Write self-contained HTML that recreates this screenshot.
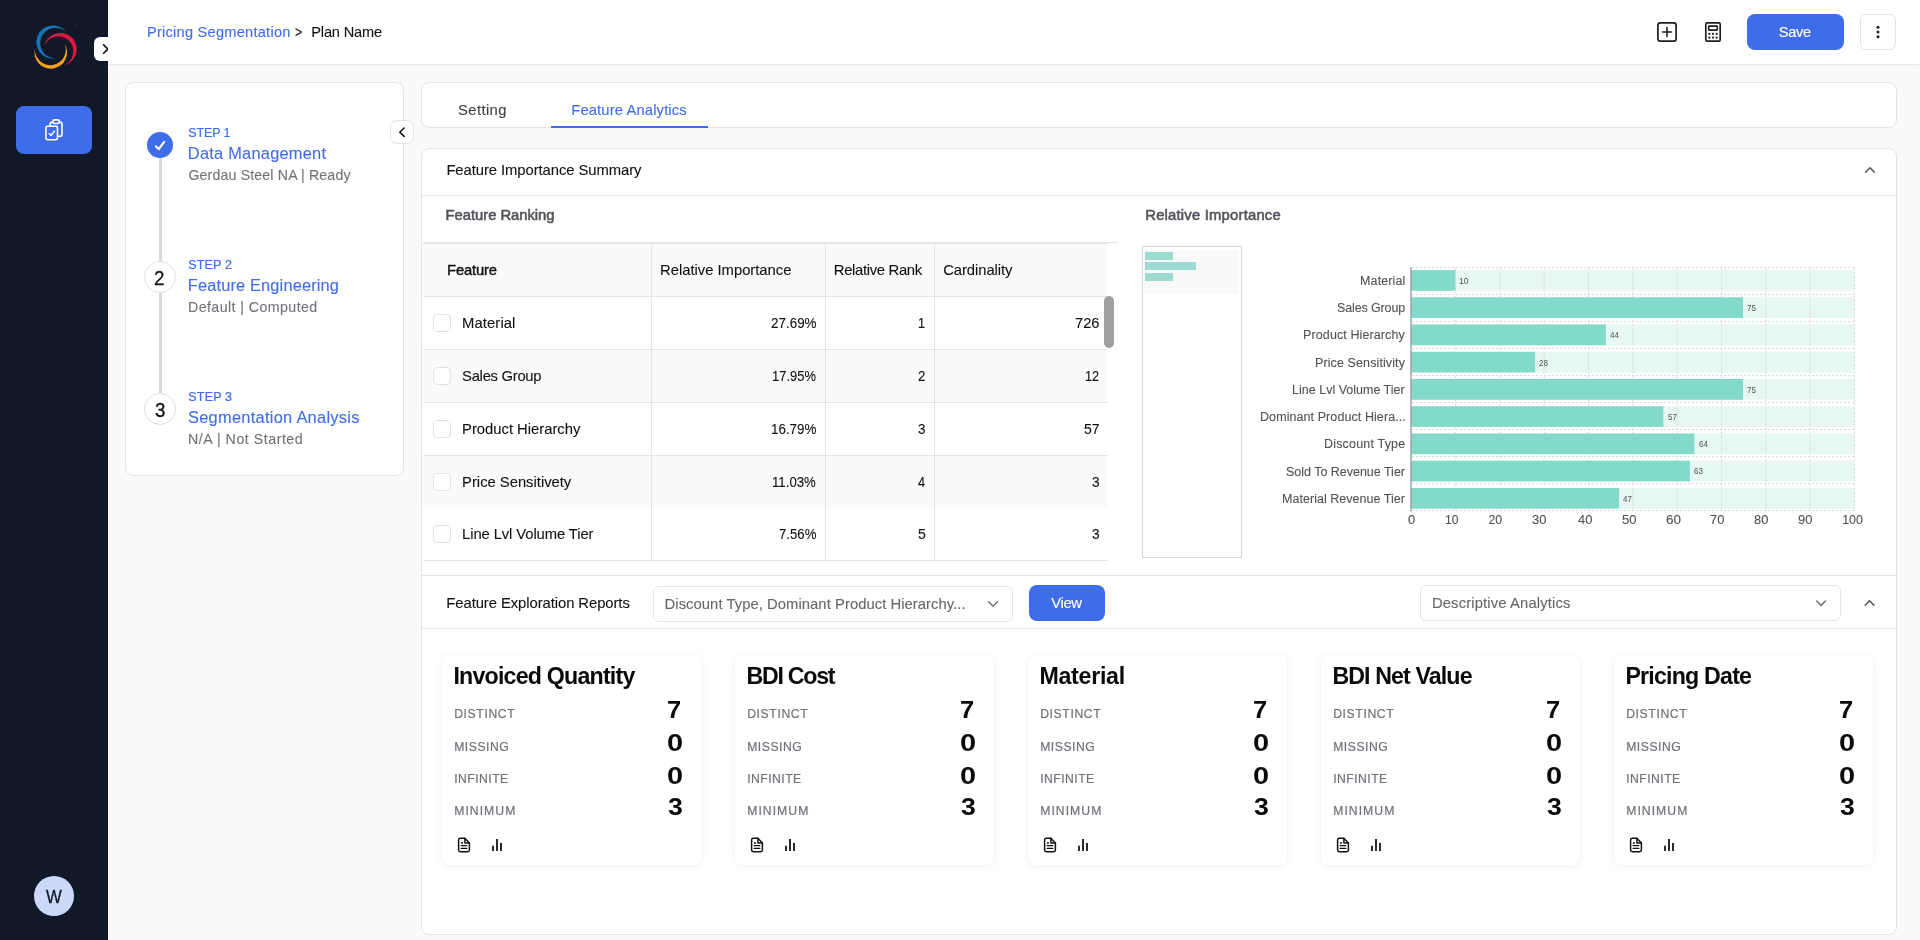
<!DOCTYPE html>
<html lang="en">
<head>
<meta charset="utf-8">
<title>Pricing Segmentation - Feature Analytics</title>
<style>
*{box-sizing:border-box;margin:0;padding:0}
html,body{width:1920px;height:940px;overflow:hidden;background:#fafafa;font-family:"Liberation Sans",sans-serif;color:#111}
.a{position:absolute}
.t{position:absolute;white-space:nowrap;line-height:1}
.card{position:absolute;background:#fff;border:1px solid #e4e4e7;border-radius:8px}
.hl{position:absolute;height:1px;background:#e5e5e5}
.vl{position:absolute;width:1px;background:#e5e5e5}
.cb{position:absolute;width:18px;height:18px;border:1px solid #e2e2e5;border-radius:4px;background:#fff}
.fc{position:absolute;top:654.6px;width:259.6px;height:210.4px;background:#fff;border-radius:8px;box-shadow:0 1px 7px rgba(0,0,0,.075)}
svg{position:absolute;overflow:visible}
</style>
</head>
<body>
<!-- sidebar -->
<div class="a" style="left:0;top:0;width:108px;height:940px;background:#111827"></div>
<svg style="left:0;top:0" width="108" height="100" viewBox="0 0 108 100"><path fill="#1973b9" d="M65.94 31.72A16.60 16.60 0 1 0 56.77 58.34A15.36 15.36 0 1 1 65.94 31.72Z"/><path fill="#e0173f" d="M44.37 46.07A16.30 16.30 0 1 1 64.04 65.07A14.97 14.97 0 1 0 44.37 46.07Z"/><path fill="#f9a11b" d="M34.99 48.43A16.30 16.30 0 1 0 64.63 43.74A15.44 15.44 0 1 1 34.99 48.43Z"/><circle cx="75.7" cy="25.4" r="0.7" fill="#1973b9" opacity="0.6"/></svg>
<div class="a" style="left:16px;top:106px;width:76px;height:48px;border-radius:8px;background:#3f6ce8"></div>
<svg style="left:30px;top:106px" width="48" height="48" viewBox="30 106 48 48" fill="none" stroke="#fff" stroke-width="1.6" stroke-linecap="round" stroke-linejoin="round">
<path d="M52.6 122.1h-0.4a2 2 0 0 0-2 2v1.6M59.6 122.1h0.4a2 2 0 0 1 2 2v10.2a2 2 0 0 1-2 2h-1.6"/>
<rect x="52.9" y="119.9" width="6.4" height="3.6" rx="1.6"/>
<rect x="45.9" y="126.3" width="11.6" height="13.4" rx="1.6"/>
<path d="M49.3 133.7l1.7 1.8 3.4-4.2" stroke-width="1.5"/>
</svg>
<div class="a" style="left:34px;top:876px;width:40px;height:40px;border-radius:50%;background:#ccd8fa"></div>
<div class="a" style="left:94px;top:37px;width:24px;height:24px;border-radius:6px;background:#fff"></div>
<svg style="left:94px;top:37px" width="14" height="24" viewBox="94 37 14 24" fill="none" stroke="#111" stroke-width="1.6" stroke-linecap="round" stroke-linejoin="round"><path d="M103.6 44.9l4.3 4.2-4.3 4.2"/></svg>
<!-- topbar -->
<div class="a" style="left:108px;top:0;width:1812px;height:65px;background:#fff;border-bottom:1px solid #eaeaea;box-shadow:0 1px 2px rgba(0,0,0,.025)"></div>
<div class="a" style="left:1747px;top:14px;width:97px;height:36px;border-radius:8px;background:#3f6ce8"></div>
<div class="a" style="left:1860px;top:14px;width:36px;height:36px;border-radius:6px;background:#fff;border:1px solid #e5e5e5"></div>
<svg style="left:1650px;top:14px" width="80" height="36" viewBox="1650 14 80 36" fill="none" stroke="#1f1f1f" stroke-width="1.7" stroke-linecap="round" stroke-linejoin="round">
<rect x="1657.9" y="22.9" width="18.2" height="18.2" rx="2.4"/>
<path d="M1662.6 32h8.8M1667 27.6v8.8" stroke-width="1.6"/>
<rect x="1705.8" y="22.9" width="14.4" height="18.2" rx="1.4"/>
<rect x="1708.7" y="26.1" width="8.6" height="4" rx="0.3" stroke-width="1.6"/>
<g fill="#1f1f1f" stroke="none"><circle cx="1709.3" cy="33.8" r="1.15"/><circle cx="1713" cy="33.8" r="1.15"/><circle cx="1716.7" cy="33.8" r="1.15"/><circle cx="1709.3" cy="37.6" r="1.15"/><circle cx="1713" cy="37.6" r="1.15"/><circle cx="1716.7" cy="37.6" r="1.15"/></g>
</svg>
<svg style="left:1860px;top:14px" width="36" height="36" viewBox="1860 14 36 36" fill="#1f1f1f"><circle cx="1878" cy="27.3" r="1.5"/><circle cx="1878" cy="32" r="1.5"/><circle cx="1878" cy="36.7" r="1.5"/></svg>
<!-- stepper card -->
<div class="card" style="left:125px;top:82px;width:279px;height:394px"></div>
<div class="a" style="left:159px;top:150px;width:3px;height:260px;background:#d9d9d9"></div>
<div class="a" style="left:147px;top:132px;width:26px;height:26px;border-radius:50%;background:#3f6ce8"></div>
<svg style="left:147px;top:132px" width="26" height="26" viewBox="147 132 26 26" fill="none" stroke="#fff" stroke-width="2.1" stroke-linecap="round" stroke-linejoin="round"><path d="M155.9 146.3l2.9 2.9 5.4-7.3"/></svg>
<div class="a" style="left:144px;top:261px;width:32px;height:32px;border-radius:50%;background:#fff;border:1px solid #e0e0e4"></div>
<div class="a" style="left:144px;top:393px;width:32px;height:32px;border-radius:50%;background:#fff;border:1px solid #e0e0e4"></div>
<div class="a" style="left:390px;top:120px;width:24px;height:24px;border-radius:7px;background:#fff;border:1px solid #e4e4e7"></div>
<svg style="left:390px;top:120px" width="24" height="24" viewBox="390 120 24 24" fill="none" stroke="#111" stroke-width="1.6" stroke-linecap="round" stroke-linejoin="round"><path d="M404.1 128l-4.3 4.2 4.3 4.2"/></svg>
<!-- tabs card -->
<div class="card" style="left:421px;top:82px;width:1476px;height:46px"></div>
<div class="a" style="left:551px;top:126px;width:157px;height:2px;background:#3f6ce8"></div>
<!-- main card -->
<div class="card" style="left:421px;top:148px;width:1476px;height:787px"></div>
<div class="hl" style="left:422px;top:195px;width:1474px"></div>
<div class="a" style="left:423px;top:242px;width:695px;height:1px;background:#e5e5e5"></div><div class="a" style="left:423px;top:243px;width:685px;height:1px;background:#e5e5e5"></div><div class="a" style="left:423px;top:244px;width:685px;height:52px;background:#fafafa"></div><div class="a" style="left:423px;top:349px;width:685px;height:53px;background:#fafafa"></div><div class="a" style="left:423px;top:455px;width:685px;height:53px;background:#fafafa"></div><div class="hl" style="left:423px;top:296px;width:685px"></div><div class="hl" style="left:423px;top:349px;width:685px"></div><div class="hl" style="left:423px;top:402px;width:685px"></div><div class="hl" style="left:423px;top:455px;width:685px"></div><div class="hl" style="left:423px;top:560px;width:685px"></div><div class="vl" style="left:651px;top:244px;height:316px"></div><div class="vl" style="left:825px;top:244px;height:316px"></div><div class="vl" style="left:934px;top:244px;height:316px"></div><div class="cb" style="left:433px;top:314px"></div><div class="cb" style="left:433px;top:367px"></div><div class="cb" style="left:433px;top:420px"></div><div class="cb" style="left:433px;top:473px"></div><div class="cb" style="left:433px;top:525px"></div><div class="a" style="left:1104px;top:295.7px;width:10.2px;height:52.2px;border-radius:5.1px;background:#a0a0a0"></div>
<div class="a" style="left:1142px;top:246px;width:100px;height:312px;border:1px solid #d6d6d6;background:#fff"></div><div class="a" style="left:1144.2px;top:250px;width:95.1px;height:43.7px;background:#f9f9f9"></div><div class="a" style="left:1145px;top:252px;width:28px;height:8.2px;background:#9ddbd0"></div><div class="a" style="left:1145px;top:262.2px;width:51px;height:8.2px;background:#9ddbd0"></div><div class="a" style="left:1145px;top:272.8px;width:28px;height:8.2px;background:#9ddbd0"></div><svg style="left:0;top:0" width="1920" height="940" viewBox="0 0 1920 940"><rect x="1411.2" y="270.05" width="443.3" height="20.7" fill="#e6f7f4"/><rect x="1411.2" y="297.29" width="443.3" height="20.7" fill="#e6f7f4"/><rect x="1411.2" y="324.53" width="443.3" height="20.7" fill="#e6f7f4"/><rect x="1411.2" y="351.77" width="443.3" height="20.7" fill="#e6f7f4"/><rect x="1411.2" y="379.01" width="443.3" height="20.7" fill="#e6f7f4"/><rect x="1411.2" y="406.25" width="443.3" height="20.7" fill="#e6f7f4"/><rect x="1411.2" y="433.49" width="443.3" height="20.7" fill="#e6f7f4"/><rect x="1411.2" y="460.73" width="443.3" height="20.7" fill="#e6f7f4"/><rect x="1411.2" y="487.97" width="443.3" height="20.7" fill="#e6f7f4"/><g stroke="#d6d6d6" stroke-width="1" stroke-dasharray="2 2" fill="none"><path d="M1412.2 267.60H1854.5"/><path d="M1412.2 294.60H1854.5"/><path d="M1412.2 321.60H1854.5"/><path d="M1412.2 348.60H1854.5"/><path d="M1412.2 375.60H1854.5"/><path d="M1412.2 402.60H1854.5"/><path d="M1412.2 429.60H1854.5"/><path d="M1412.2 456.60H1854.5"/><path d="M1412.2 483.60H1854.5"/><path d="M1412.2 510.60H1854.5"/><path d="M1455.53 267.6V510.6"/><path d="M1499.86 267.6V510.6"/><path d="M1544.19 267.6V510.6"/><path d="M1588.52 267.6V510.6"/><path d="M1632.85 267.6V510.6"/><path d="M1677.18 267.6V510.6"/><path d="M1721.51 267.6V510.6"/><path d="M1765.84 267.6V510.6"/><path d="M1810.17 267.6V510.6"/><path d="M1854.50 267.6V510.6"/></g><rect x="1411.2" y="270.05" width="44.2" height="20.7" fill="#7fd8c8" fill-opacity="0.96"/><rect x="1411.2" y="297.29" width="331.8" height="20.7" fill="#7fd8c8" fill-opacity="0.96"/><rect x="1411.2" y="324.53" width="194.7" height="20.7" fill="#7fd8c8" fill-opacity="0.96"/><rect x="1411.2" y="351.77" width="123.9" height="20.7" fill="#7fd8c8" fill-opacity="0.96"/><rect x="1411.2" y="379.01" width="331.8" height="20.7" fill="#7fd8c8" fill-opacity="0.96"/><rect x="1411.2" y="406.25" width="252.2" height="20.7" fill="#7fd8c8" fill-opacity="0.96"/><rect x="1411.2" y="433.49" width="283.1" height="20.7" fill="#7fd8c8" fill-opacity="0.96"/><rect x="1411.2" y="460.73" width="278.7" height="20.7" fill="#7fd8c8" fill-opacity="0.96"/><rect x="1411.2" y="487.97" width="207.9" height="20.7" fill="#7fd8c8" fill-opacity="0.96"/><path d="M1411 267V511.6" stroke="#9696a2" stroke-width="1.3"/></svg>
<div class="hl" style="left:422px;top:575px;width:1474px"></div>
<div class="hl" style="left:422px;top:628px;width:1474px"></div>
<div class="a" style="left:653px;top:586px;width:360px;height:36px;border-radius:6px;background:#fff;border:1px solid #e5e5e5"></div>
<div class="a" style="left:1029px;top:585px;width:76px;height:36px;border-radius:8px;background:#3f6ce8"></div>
<div class="a" style="left:1420px;top:585px;width:421px;height:36px;border-radius:6px;background:#fff;border:1px solid #e5e5e5"></div>
<svg style="left:0;top:0" width="1920" height="940" viewBox="0 0 1920 940" fill="none" stroke-width="1.5" stroke-linecap="round" stroke-linejoin="round">
<path d="M988.7 601.8l4.4 4.4 4.4-4.4" stroke="#71717a"/><path d="M1816.6999999999998 601.0l4.4 4.4 4.4-4.4" stroke="#71717a"/><path d="M1865.1999999999998 605.2l4.4-4.4 4.4 4.4" stroke="#52525b"/><path d="M1865.6 172.2l4.4-4.4 4.4 4.4" stroke="#52525b"/>
</svg>
<div class="fc" style="left:441.8px"></div><svg style="left:454px;top:834px" width="56" height="22" viewBox="454 834 56 22" fill="none" stroke="#111" stroke-width="1.5" stroke-linecap="round" stroke-linejoin="round"><path d="M464.9 838.3h-4.6a1.7 1.7 0 0 0-1.7 1.7v10a1.7 1.7 0 0 0 1.7 1.7h7.4a1.7 1.7 0 0 0 1.7-1.7v-7.1z"/><path d="M464.9 838.3v4.6h4.5"/><path d="M461.2 845.7h5.6M461.2 848.45h5.6" stroke-width="1.3"/><rect x="461.1" y="842.1" width="1.7" height="1.7" fill="#111" stroke="none"/><path d="M493 851v-5.3M497 851v-11.9M501 851v-8" stroke="#222" stroke-width="1.9" stroke-linecap="butt"/></svg><div class="fc" style="left:734.8px"></div><svg style="left:747px;top:834px" width="56" height="22" viewBox="454 834 56 22" fill="none" stroke="#111" stroke-width="1.5" stroke-linecap="round" stroke-linejoin="round"><path d="M464.9 838.3h-4.6a1.7 1.7 0 0 0-1.7 1.7v10a1.7 1.7 0 0 0 1.7 1.7h7.4a1.7 1.7 0 0 0 1.7-1.7v-7.1z"/><path d="M464.9 838.3v4.6h4.5"/><path d="M461.2 845.7h5.6M461.2 848.45h5.6" stroke-width="1.3"/><rect x="461.1" y="842.1" width="1.7" height="1.7" fill="#111" stroke="none"/><path d="M493 851v-5.3M497 851v-11.9M501 851v-8" stroke="#222" stroke-width="1.9" stroke-linecap="butt"/></svg><div class="fc" style="left:1027.8px"></div><svg style="left:1040px;top:834px" width="56" height="22" viewBox="454 834 56 22" fill="none" stroke="#111" stroke-width="1.5" stroke-linecap="round" stroke-linejoin="round"><path d="M464.9 838.3h-4.6a1.7 1.7 0 0 0-1.7 1.7v10a1.7 1.7 0 0 0 1.7 1.7h7.4a1.7 1.7 0 0 0 1.7-1.7v-7.1z"/><path d="M464.9 838.3v4.6h4.5"/><path d="M461.2 845.7h5.6M461.2 848.45h5.6" stroke-width="1.3"/><rect x="461.1" y="842.1" width="1.7" height="1.7" fill="#111" stroke="none"/><path d="M493 851v-5.3M497 851v-11.9M501 851v-8" stroke="#222" stroke-width="1.9" stroke-linecap="butt"/></svg><div class="fc" style="left:1320.8px"></div><svg style="left:1333px;top:834px" width="56" height="22" viewBox="454 834 56 22" fill="none" stroke="#111" stroke-width="1.5" stroke-linecap="round" stroke-linejoin="round"><path d="M464.9 838.3h-4.6a1.7 1.7 0 0 0-1.7 1.7v10a1.7 1.7 0 0 0 1.7 1.7h7.4a1.7 1.7 0 0 0 1.7-1.7v-7.1z"/><path d="M464.9 838.3v4.6h4.5"/><path d="M461.2 845.7h5.6M461.2 848.45h5.6" stroke-width="1.3"/><rect x="461.1" y="842.1" width="1.7" height="1.7" fill="#111" stroke="none"/><path d="M493 851v-5.3M497 851v-11.9M501 851v-8" stroke="#222" stroke-width="1.9" stroke-linecap="butt"/></svg><div class="fc" style="left:1613.8px"></div><svg style="left:1626px;top:834px" width="56" height="22" viewBox="454 834 56 22" fill="none" stroke="#111" stroke-width="1.5" stroke-linecap="round" stroke-linejoin="round"><path d="M464.9 838.3h-4.6a1.7 1.7 0 0 0-1.7 1.7v10a1.7 1.7 0 0 0 1.7 1.7h7.4a1.7 1.7 0 0 0 1.7-1.7v-7.1z"/><path d="M464.9 838.3v4.6h4.5"/><path d="M461.2 845.7h5.6M461.2 848.45h5.6" stroke-width="1.3"/><rect x="461.1" y="842.1" width="1.7" height="1.7" fill="#111" stroke="none"/><path d="M493 851v-5.3M497 851v-11.9M501 851v-8" stroke="#222" stroke-width="1.9" stroke-linecap="butt"/></svg>
<div class="a" style="left:0;top:0;width:1920px;height:940px;will-change:transform">
<div class="t" style="left:147.00px;top:25px;font-size:14.6px;color:#3f6ce8;letter-spacing:0.245px;-webkit-text-stroke:0.1px #3f6ce8;">Pricing Segmentation</div>
<div class="t" style="left:294.96px;top:25px;font-size:14.6px;color:#111111;-webkit-text-stroke:0.1px #111111;transform:scaleX(0.8600);transform-origin:0 0;">&gt;</div>
<div class="t" style="left:311.30px;top:25px;font-size:14.6px;color:#111111;letter-spacing:-0.174px;-webkit-text-stroke:0.1px #111111;">Plan Name</div>
<div class="t" style="left:1778.85px;top:25px;font-size:14.6px;color:#fff;letter-spacing:-0.326px;-webkit-text-stroke:0.15px #fff;">Save</div>
<div class="t" style="left:188.37px;top:127px;font-size:12.5px;color:#3f6ce8;letter-spacing:-0.161px;-webkit-text-stroke:0.2px #3f6ce8;">STEP 1</div>
<div class="t" style="left:187.84px;top:145px;font-size:16.4px;color:#3f6ce8;letter-spacing:0.236px;-webkit-text-stroke:0.1px #3f6ce8;">Data Management</div>
<div class="t" style="left:188.39px;top:168px;font-size:14.2px;color:#71717a;letter-spacing:0.141px;-webkit-text-stroke:0.1px #71717a;">Gerdau Steel NA | Ready</div>
<div class="t" style="left:188.37px;top:259px;font-size:12.5px;color:#3f6ce8;letter-spacing:0.142px;-webkit-text-stroke:0.2px #3f6ce8;">STEP 2</div>
<div class="t" style="left:187.84px;top:277px;font-size:16.4px;color:#3f6ce8;letter-spacing:0.142px;-webkit-text-stroke:0.1px #3f6ce8;">Feature Engineering</div>
<div class="t" style="left:188.00px;top:300px;font-size:14.2px;color:#71717a;letter-spacing:0.426px;-webkit-text-stroke:0.1px #71717a;">Default | Computed</div>
<div class="t" style="left:188.37px;top:391px;font-size:12.5px;color:#3f6ce8;letter-spacing:0.168px;-webkit-text-stroke:0.2px #3f6ce8;">STEP 3</div>
<div class="t" style="left:188.00px;top:409px;font-size:16.4px;color:#3f6ce8;letter-spacing:0.277px;-webkit-text-stroke:0.1px #3f6ce8;">Segmentation Analysis</div>
<div class="t" style="left:188.00px;top:432px;font-size:14.2px;color:#71717a;letter-spacing:0.529px;-webkit-text-stroke:0.1px #71717a;">N/A | Not Started</div>
<div class="t" style="left:154.30px;top:267px;font-size:21px;color:#111111;-webkit-text-stroke:0.3px #111111;transform:scaleX(0.8935);transform-origin:0 0;">2</div>
<div class="t" style="left:154.54px;top:399px;font-size:21px;color:#111111;-webkit-text-stroke:0.3px #111111;transform:scaleX(0.8920);transform-origin:0 0;">3</div>
<div class="t" style="left:46.10px;top:888px;font-size:18.2px;color:#111827;-webkit-text-stroke:0.3px #111827;transform:scaleX(0.9206);transform-origin:0 0;">W</div>
<div class="t" style="left:458.10px;top:103px;font-size:14.8px;color:#404040;letter-spacing:0.367px;-webkit-text-stroke:0.1px #404040;">Setting</div>
<div class="t" style="left:571.28px;top:103px;font-size:14.8px;color:#3f6ce8;letter-spacing:0.120px;-webkit-text-stroke:0.1px #3f6ce8;">Feature Analytics</div>
<div class="t" style="left:446.38px;top:163px;font-size:14.8px;color:#111111;letter-spacing:-0.060px;-webkit-text-stroke:0.1px #111111;">Feature Importance Summary</div>
<div class="t" style="left:445.60px;top:208px;font-size:14.8px;color:#52525b;letter-spacing:-0.034px;-webkit-text-stroke:0.55px #52525b;">Feature Ranking</div>
<div class="t" style="left:1145.25px;top:208px;font-size:14.8px;color:#52525b;letter-spacing:0.214px;-webkit-text-stroke:0.55px #52525b;">Relative Importance</div>
<div class="t" style="left:447.00px;top:263px;font-size:14.8px;color:#111111;letter-spacing:-0.154px;-webkit-text-stroke:0.4px #111111;">Feature</div>
<div class="t" style="left:660.08px;top:263px;font-size:14.8px;color:#111111;letter-spacing:-0.014px;-webkit-text-stroke:0.1px #111111;">Relative Importance</div>
<div class="t" style="left:833.83px;top:263px;font-size:14.8px;color:#111111;letter-spacing:-0.318px;-webkit-text-stroke:0.1px #111111;">Relative Rank</div>
<div class="t" style="left:943.20px;top:263px;font-size:14.8px;color:#111111;letter-spacing:-0.058px;-webkit-text-stroke:0.1px #111111;">Cardinality</div>
<div class="t" style="left:462.08px;top:316px;font-size:14.8px;color:#111111;letter-spacing:0.100px;-webkit-text-stroke:0.1px #111111;">Material</div>
<div class="t" style="left:770.58px;top:316px;font-size:14.8px;color:#111111;-webkit-text-stroke:0.1px #111111;transform:scaleX(0.9080);transform-origin:0 0;">27.69%</div>
<div class="t" style="left:918.39px;top:316px;font-size:14.8px;color:#111111;-webkit-text-stroke:0.1px #111111;transform:scaleX(0.8600);transform-origin:0 0;">1</div>
<div class="t" style="left:1074.99px;top:316px;font-size:14.8px;color:#111111;-webkit-text-stroke:0.1px #111111;transform:scaleX(0.9899);transform-origin:0 0;">726</div>
<div class="t" style="left:462.10px;top:369px;font-size:14.8px;color:#111111;letter-spacing:-0.284px;-webkit-text-stroke:0.1px #111111;">Sales Group</div>
<div class="t" style="left:772.10px;top:369px;font-size:14.8px;color:#111111;-webkit-text-stroke:0.1px #111111;transform:scaleX(0.8744);transform-origin:0 0;">17.95%</div>
<div class="t" style="left:918.07px;top:369px;font-size:14.8px;color:#111111;-webkit-text-stroke:0.1px #111111;transform:scaleX(0.9067);transform-origin:0 0;">2</div>
<div class="t" style="left:1085.10px;top:369px;font-size:14.8px;color:#111111;-webkit-text-stroke:0.1px #111111;transform:scaleX(0.8600);transform-origin:0 0;">12</div>
<div class="t" style="left:462.08px;top:422px;font-size:14.8px;color:#111111;letter-spacing:-0.012px;-webkit-text-stroke:0.1px #111111;">Product Hierarchy</div>
<div class="t" style="left:770.60px;top:422px;font-size:14.8px;color:#111111;-webkit-text-stroke:0.1px #111111;transform:scaleX(0.9052);transform-origin:0 0;">16.79%</div>
<div class="t" style="left:918.07px;top:422px;font-size:14.8px;color:#111111;-webkit-text-stroke:0.1px #111111;transform:scaleX(0.9048);transform-origin:0 0;">3</div>
<div class="t" style="left:1083.60px;top:422px;font-size:14.8px;color:#111111;-webkit-text-stroke:0.1px #111111;transform:scaleX(0.9477);transform-origin:0 0;">57</div>
<div class="t" style="left:462.08px;top:475px;font-size:14.8px;color:#111111;letter-spacing:-0.012px;-webkit-text-stroke:0.1px #111111;">Price Sensitivety</div>
<div class="t" style="left:772.10px;top:475px;font-size:14.8px;color:#111111;-webkit-text-stroke:0.1px #111111;transform:scaleX(0.8927);transform-origin:0 0;">11.03%</div>
<div class="t" style="left:918.09px;top:475px;font-size:14.8px;color:#111111;-webkit-text-stroke:0.1px #111111;transform:scaleX(0.8675);transform-origin:0 0;">4</div>
<div class="t" style="left:1091.65px;top:475px;font-size:14.8px;color:#111111;-webkit-text-stroke:0.1px #111111;transform:scaleX(0.9260);transform-origin:0 0;">3</div>
<div class="t" style="left:462.08px;top:527px;font-size:14.8px;color:#111111;letter-spacing:-0.096px;-webkit-text-stroke:0.1px #111111;">Line Lvl Volume Tier</div>
<div class="t" style="left:778.82px;top:527px;font-size:14.8px;color:#111111;-webkit-text-stroke:0.1px #111111;transform:scaleX(0.8903);transform-origin:0 0;">7.56%</div>
<div class="t" style="left:917.60px;top:527px;font-size:14.8px;color:#111111;-webkit-text-stroke:0.1px #111111;transform:scaleX(0.9495);transform-origin:0 0;">5</div>
<div class="t" style="left:1091.65px;top:527px;font-size:14.8px;color:#111111;-webkit-text-stroke:0.1px #111111;transform:scaleX(0.9260);transform-origin:0 0;">3</div>
<div class="t" style="left:1360.10px;top:275px;font-size:12.5px;color:#525252;letter-spacing:0.104px;-webkit-text-stroke:0.1px #525252;">Material</div>
<div class="t" style="left:1459.36px;top:277px;font-size:8.8px;color:#525252;transform:scaleX(0.9748);transform-origin:0 0;">10</div>
<div class="t" style="left:1337.10px;top:302px;font-size:12.5px;color:#525252;letter-spacing:-0.140px;-webkit-text-stroke:0.1px #525252;">Sales Group</div>
<div class="t" style="left:1747.14px;top:304px;font-size:8.8px;color:#525252;transform:scaleX(0.9217);transform-origin:0 0;">75</div>
<div class="t" style="left:1303.10px;top:329px;font-size:12.5px;color:#525252;letter-spacing:0.100px;-webkit-text-stroke:0.1px #525252;">Product Hierarchy</div>
<div class="t" style="left:1610.14px;top:331px;font-size:8.8px;color:#525252;transform:scaleX(0.9133);transform-origin:0 0;">44</div>
<div class="t" style="left:1315.00px;top:357px;font-size:12.5px;color:#525252;letter-spacing:0.106px;-webkit-text-stroke:0.1px #525252;">Price Sensitivity</div>
<div class="t" style="left:1539.34px;top:359px;font-size:8.8px;color:#525252;transform:scaleX(0.9108);transform-origin:0 0;">28</div>
<div class="t" style="left:1292.10px;top:384px;font-size:12.5px;color:#525252;-webkit-text-stroke:0.1px #525252;">Line Lvl Volume Tier</div>
<div class="t" style="left:1747.14px;top:386px;font-size:8.8px;color:#525252;transform:scaleX(0.9217);transform-origin:0 0;">75</div>
<div class="t" style="left:1260.00px;top:411px;font-size:12.5px;color:#525252;letter-spacing:0.081px;-webkit-text-stroke:0.1px #525252;">Dominant Product Hiera...</div>
<div class="t" style="left:1667.54px;top:413px;font-size:8.8px;color:#525252;transform:scaleX(0.9182);transform-origin:0 0;">57</div>
<div class="t" style="left:1324.00px;top:438px;font-size:12.5px;color:#525252;letter-spacing:0.183px;-webkit-text-stroke:0.1px #525252;">Discount Type</div>
<div class="t" style="left:1698.62px;top:440px;font-size:8.8px;color:#525252;transform:scaleX(0.9197);transform-origin:0 0;">64</div>
<div class="t" style="left:1286.00px;top:466px;font-size:12.5px;color:#525252;letter-spacing:-0.016px;-webkit-text-stroke:0.1px #525252;">Sold To Revenue Tier</div>
<div class="t" style="left:1694.20px;top:467px;font-size:8.8px;color:#525252;transform:scaleX(0.9113);transform-origin:0 0;">63</div>
<div class="t" style="left:1282.10px;top:493px;font-size:12.5px;color:#525252;letter-spacing:0.030px;-webkit-text-stroke:0.1px #525252;">Material Revenue Tier</div>
<div class="t" style="left:1623.41px;top:495px;font-size:8.8px;color:#525252;transform:scaleX(0.9002);transform-origin:0 0;">47</div>
<div class="t" style="left:1408.35px;top:514px;font-size:12.4px;color:#525252;-webkit-text-stroke:0.1px #525252;transform:scaleX(1.0402);transform-origin:0 0;">0</div>
<div class="t" style="left:1444.60px;top:514px;font-size:12.4px;color:#525252;-webkit-text-stroke:0.1px #525252;transform:scaleX(0.9805);transform-origin:0 0;">10</div>
<div class="t" style="left:1488.43px;top:514px;font-size:12.4px;color:#525252;-webkit-text-stroke:0.1px #525252;">20</div>
<div class="t" style="left:1532.40px;top:514px;font-size:12.4px;color:#525252;-webkit-text-stroke:0.1px #525252;transform:scaleX(1.0493);transform-origin:0 0;">30</div>
<div class="t" style="left:1577.71px;top:514px;font-size:12.4px;color:#525252;-webkit-text-stroke:0.1px #525252;transform:scaleX(1.0404);transform-origin:0 0;">40</div>
<div class="t" style="left:1622.13px;top:514px;font-size:12.4px;color:#525252;-webkit-text-stroke:0.1px #525252;transform:scaleX(1.0525);transform-origin:0 0;">50</div>
<div class="t" style="left:1665.84px;top:514px;font-size:12.4px;color:#525252;-webkit-text-stroke:0.1px #525252;transform:scaleX(1.0890);transform-origin:0 0;">60</div>
<div class="t" style="left:1709.90px;top:514px;font-size:12.4px;color:#525252;-webkit-text-stroke:0.1px #525252;transform:scaleX(1.0407);transform-origin:0 0;">70</div>
<div class="t" style="left:1754.17px;top:514px;font-size:12.4px;color:#525252;-webkit-text-stroke:0.1px #525252;transform:scaleX(1.0364);transform-origin:0 0;">80</div>
<div class="t" style="left:1798.28px;top:514px;font-size:12.4px;color:#525252;-webkit-text-stroke:0.1px #525252;transform:scaleX(1.0426);transform-origin:0 0;">90</div>
<div class="t" style="left:1842.20px;top:514px;font-size:12.4px;color:#525252;-webkit-text-stroke:0.1px #525252;">100</div>
<div class="t" style="left:446.33px;top:596px;font-size:14.8px;color:#111111;letter-spacing:-0.060px;-webkit-text-stroke:0.1px #111111;">Feature Exploration Reports</div>
<div class="t" style="left:664.58px;top:597px;font-size:14.8px;color:#666666;letter-spacing:0.052px;-webkit-text-stroke:0.1px #666666;">Discount Type, Dominant Product Hierarchy...</div>
<div class="t" style="left:1051.31px;top:596px;font-size:14.8px;color:#fff;letter-spacing:-0.368px;-webkit-text-stroke:0.15px #fff;">View</div>
<div class="t" style="left:1431.88px;top:596px;font-size:14.8px;color:#666666;letter-spacing:0.146px;-webkit-text-stroke:0.1px #666666;">Descriptive Analytics</div>
<div class="t" style="left:453.40px;top:665px;font-size:23.2px;color:#0a0a0a;letter-spacing:-0.786px;font-weight:700;">Invoiced Quantity</div>
<div class="t" style="left:454.20px;top:708px;font-size:12.2px;color:#71717a;letter-spacing:0.614px;-webkit-text-stroke:0.2px #71717a;">DISTINCT</div>
<div class="t" style="left:667.10px;top:698px;font-size:24.8px;color:#0a0a0a;font-weight:700;transform:scaleX(1.0246);transform-origin:0 0;">7</div>
<div class="t" style="left:454.20px;top:741px;font-size:12.2px;color:#71717a;letter-spacing:0.531px;-webkit-text-stroke:0.2px #71717a;">MISSING</div>
<div class="t" style="left:667.10px;top:731px;font-size:24.8px;color:#0a0a0a;font-weight:700;transform:scaleX(1.1669);transform-origin:0 0;">0</div>
<div class="t" style="left:454.20px;top:773px;font-size:12.2px;color:#71717a;letter-spacing:0.457px;-webkit-text-stroke:0.2px #71717a;">INFINITE</div>
<div class="t" style="left:667.10px;top:764px;font-size:24.8px;color:#0a0a0a;font-weight:700;transform:scaleX(1.1669);transform-origin:0 0;">0</div>
<div class="t" style="left:454.20px;top:805px;font-size:12.2px;color:#71717a;letter-spacing:1.050px;-webkit-text-stroke:0.2px #71717a;">MINIMUM</div>
<div class="t" style="left:667.60px;top:795px;font-size:24.8px;color:#0a0a0a;font-weight:700;transform:scaleX(1.0750);transform-origin:0 0;">3</div>
<div class="t" style="left:746.41px;top:665px;font-size:23.2px;color:#0a0a0a;letter-spacing:-1.250px;font-weight:700;">BDI Cost</div>
<div class="t" style="left:747.20px;top:708px;font-size:12.2px;color:#71717a;letter-spacing:0.614px;-webkit-text-stroke:0.2px #71717a;">DISTINCT</div>
<div class="t" style="left:960.10px;top:698px;font-size:24.8px;color:#0a0a0a;font-weight:700;transform:scaleX(1.0246);transform-origin:0 0;">7</div>
<div class="t" style="left:747.20px;top:741px;font-size:12.2px;color:#71717a;letter-spacing:0.531px;-webkit-text-stroke:0.2px #71717a;">MISSING</div>
<div class="t" style="left:960.10px;top:731px;font-size:24.8px;color:#0a0a0a;font-weight:700;transform:scaleX(1.1669);transform-origin:0 0;">0</div>
<div class="t" style="left:747.20px;top:773px;font-size:12.2px;color:#71717a;letter-spacing:0.457px;-webkit-text-stroke:0.2px #71717a;">INFINITE</div>
<div class="t" style="left:960.10px;top:764px;font-size:24.8px;color:#0a0a0a;font-weight:700;transform:scaleX(1.1669);transform-origin:0 0;">0</div>
<div class="t" style="left:747.20px;top:805px;font-size:12.2px;color:#71717a;letter-spacing:1.050px;-webkit-text-stroke:0.2px #71717a;">MINIMUM</div>
<div class="t" style="left:960.60px;top:795px;font-size:24.8px;color:#0a0a0a;font-weight:700;transform:scaleX(1.0750);transform-origin:0 0;">3</div>
<div class="t" style="left:1039.41px;top:665px;font-size:23.2px;color:#0a0a0a;letter-spacing:-0.273px;font-weight:700;">Material</div>
<div class="t" style="left:1040.20px;top:708px;font-size:12.2px;color:#71717a;letter-spacing:0.614px;-webkit-text-stroke:0.2px #71717a;">DISTINCT</div>
<div class="t" style="left:1253.10px;top:698px;font-size:24.8px;color:#0a0a0a;font-weight:700;transform:scaleX(1.0246);transform-origin:0 0;">7</div>
<div class="t" style="left:1040.20px;top:741px;font-size:12.2px;color:#71717a;letter-spacing:0.531px;-webkit-text-stroke:0.2px #71717a;">MISSING</div>
<div class="t" style="left:1253.10px;top:731px;font-size:24.8px;color:#0a0a0a;font-weight:700;transform:scaleX(1.1669);transform-origin:0 0;">0</div>
<div class="t" style="left:1040.20px;top:773px;font-size:12.2px;color:#71717a;letter-spacing:0.457px;-webkit-text-stroke:0.2px #71717a;">INFINITE</div>
<div class="t" style="left:1253.10px;top:764px;font-size:24.8px;color:#0a0a0a;font-weight:700;transform:scaleX(1.1669);transform-origin:0 0;">0</div>
<div class="t" style="left:1040.20px;top:805px;font-size:12.2px;color:#71717a;letter-spacing:1.050px;-webkit-text-stroke:0.2px #71717a;">MINIMUM</div>
<div class="t" style="left:1253.60px;top:795px;font-size:24.8px;color:#0a0a0a;font-weight:700;transform:scaleX(1.0750);transform-origin:0 0;">3</div>
<div class="t" style="left:1332.41px;top:665px;font-size:23.2px;color:#0a0a0a;letter-spacing:-0.886px;font-weight:700;">BDI Net Value</div>
<div class="t" style="left:1333.20px;top:708px;font-size:12.2px;color:#71717a;letter-spacing:0.614px;-webkit-text-stroke:0.2px #71717a;">DISTINCT</div>
<div class="t" style="left:1546.10px;top:698px;font-size:24.8px;color:#0a0a0a;font-weight:700;transform:scaleX(1.0246);transform-origin:0 0;">7</div>
<div class="t" style="left:1333.20px;top:741px;font-size:12.2px;color:#71717a;letter-spacing:0.531px;-webkit-text-stroke:0.2px #71717a;">MISSING</div>
<div class="t" style="left:1546.10px;top:731px;font-size:24.8px;color:#0a0a0a;font-weight:700;transform:scaleX(1.1669);transform-origin:0 0;">0</div>
<div class="t" style="left:1333.20px;top:773px;font-size:12.2px;color:#71717a;letter-spacing:0.457px;-webkit-text-stroke:0.2px #71717a;">INFINITE</div>
<div class="t" style="left:1546.10px;top:764px;font-size:24.8px;color:#0a0a0a;font-weight:700;transform:scaleX(1.1669);transform-origin:0 0;">0</div>
<div class="t" style="left:1333.20px;top:805px;font-size:12.2px;color:#71717a;letter-spacing:1.050px;-webkit-text-stroke:0.2px #71717a;">MINIMUM</div>
<div class="t" style="left:1546.60px;top:795px;font-size:24.8px;color:#0a0a0a;font-weight:700;transform:scaleX(1.0750);transform-origin:0 0;">3</div>
<div class="t" style="left:1625.41px;top:665px;font-size:23.2px;color:#0a0a0a;letter-spacing:-0.794px;font-weight:700;">Pricing Date</div>
<div class="t" style="left:1626.20px;top:708px;font-size:12.2px;color:#71717a;letter-spacing:0.614px;-webkit-text-stroke:0.2px #71717a;">DISTINCT</div>
<div class="t" style="left:1839.10px;top:698px;font-size:24.8px;color:#0a0a0a;font-weight:700;transform:scaleX(1.0246);transform-origin:0 0;">7</div>
<div class="t" style="left:1626.20px;top:741px;font-size:12.2px;color:#71717a;letter-spacing:0.531px;-webkit-text-stroke:0.2px #71717a;">MISSING</div>
<div class="t" style="left:1839.10px;top:731px;font-size:24.8px;color:#0a0a0a;font-weight:700;transform:scaleX(1.1669);transform-origin:0 0;">0</div>
<div class="t" style="left:1626.20px;top:773px;font-size:12.2px;color:#71717a;letter-spacing:0.457px;-webkit-text-stroke:0.2px #71717a;">INFINITE</div>
<div class="t" style="left:1839.10px;top:764px;font-size:24.8px;color:#0a0a0a;font-weight:700;transform:scaleX(1.1669);transform-origin:0 0;">0</div>
<div class="t" style="left:1626.20px;top:805px;font-size:12.2px;color:#71717a;letter-spacing:1.050px;-webkit-text-stroke:0.2px #71717a;">MINIMUM</div>
<div class="t" style="left:1839.60px;top:795px;font-size:24.8px;color:#0a0a0a;font-weight:700;transform:scaleX(1.0750);transform-origin:0 0;">3</div>
</div>
</body>
</html>
